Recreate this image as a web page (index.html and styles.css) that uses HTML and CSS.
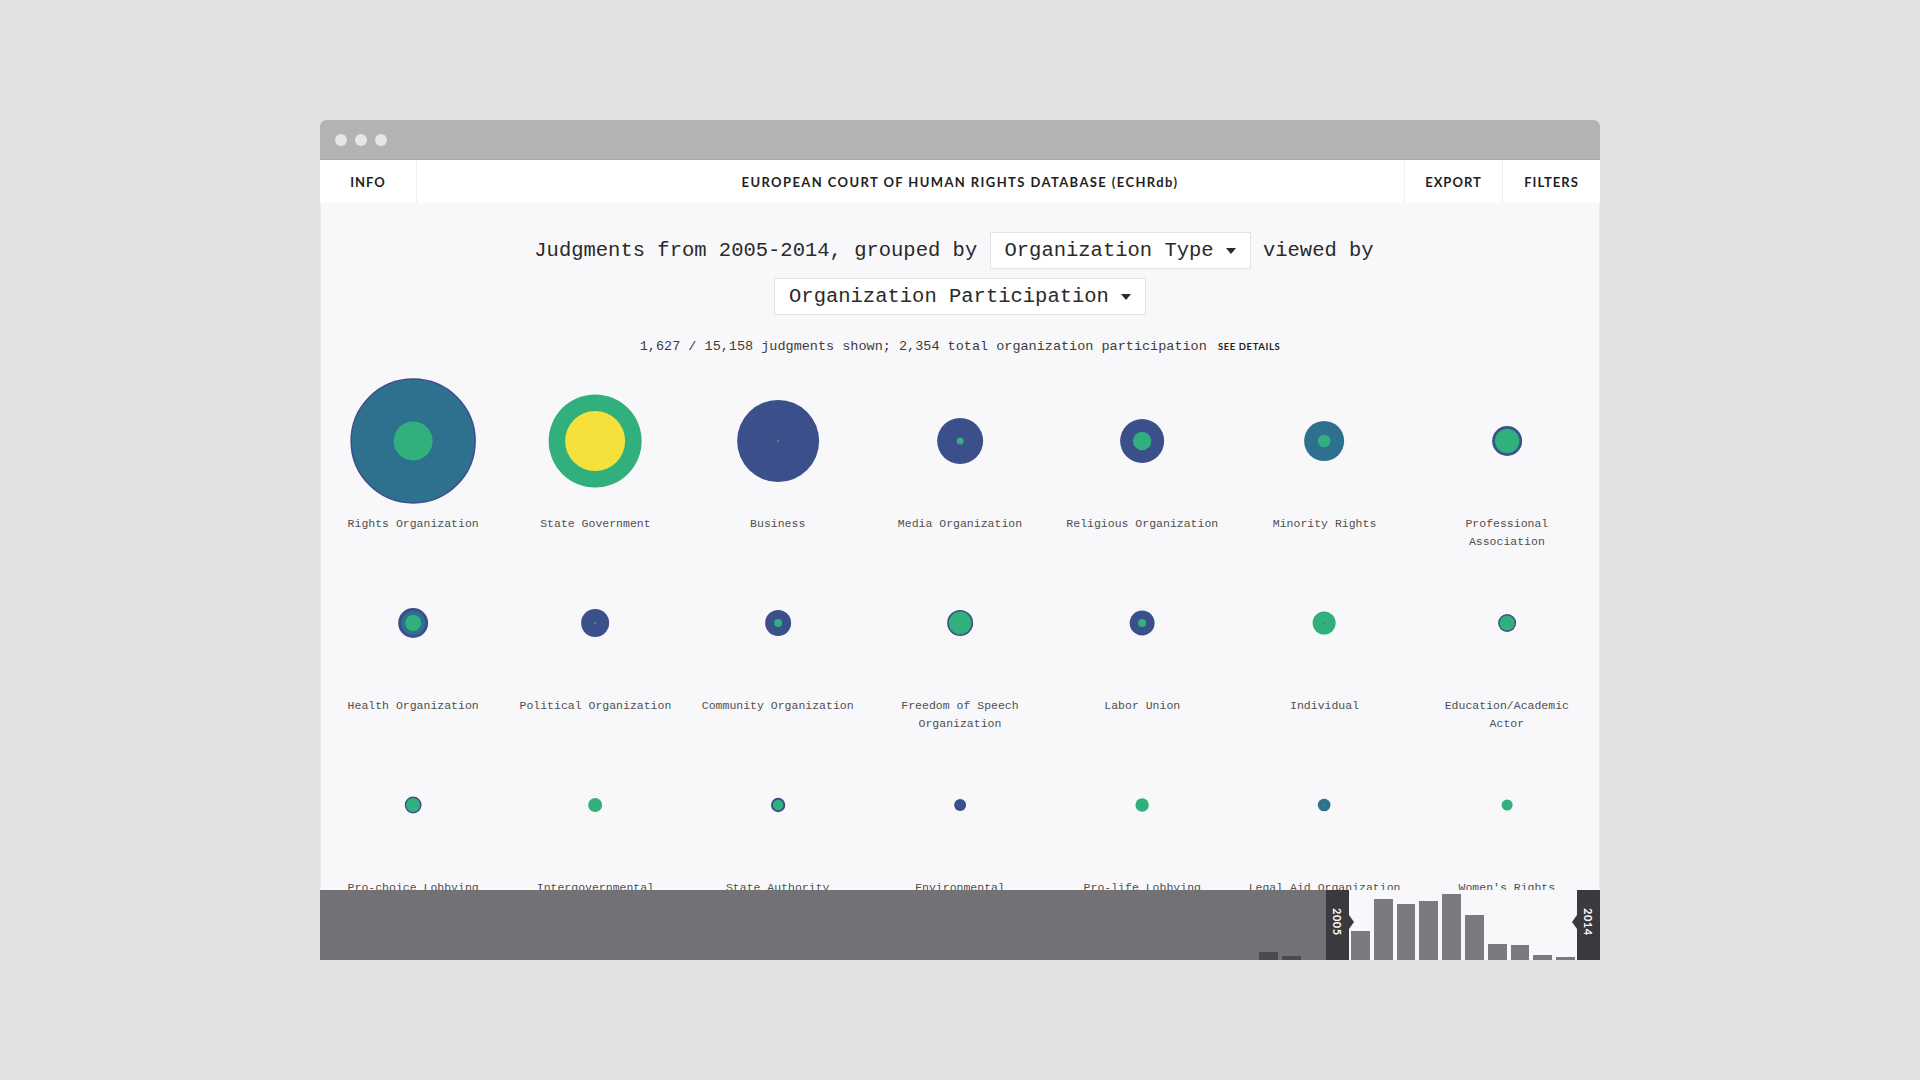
FILE: index.html
```html
<!DOCTYPE html>
<html lang="en">
<head>
    <meta charset="UTF-8">
    <meta name="viewport" content="width=device-width, initial-scale=1.0">
    <title>ECHRdb - Judgments by Organization Type</title>
    <link rel="stylesheet" href="styles.css">
</head>
<body>
    <div class="window">
        <div class="titlebar">
            <span class="dot"></span>
            <span class="dot"></span>
            <span class="dot"></span>
        </div>
        <header class="nav">
            <div class="nav-left">
                <a class="nav-item">INFO</a>
            </div>
            <div class="nav-title">EUROPEAN COURT OF HUMAN RIGHTS DATABASE (ECHRdb)</div>
            <div class="nav-right">
                <a class="nav-item">EXPORT</a>
                <a class="nav-item">FILTERS</a>
            </div>
        </header>
        <main class="content">
            <h1 class="query">Judgments from 2005-2014, grouped by <span class="select">Organization Type<i class="caret"></i></span> viewed by <span class="select">Organization Participation<i class="caret"></i></span></h1>
            <p class="summary">1,627 / 15,158 judgments shown; 2,354 total organization participation <a class="details">SEE DETAILS</a></p>
            <div class="grid" id="grid"></div>
        </main>
        <footer class="timeline">
            <div class="tl-out" id="tlOut"></div>
            <div class="handle handle-start"><span>2005</span></div>
            <div class="tl-in" id="tlIn"></div>
            <div class="handle handle-end"><span>2014</span></div>
        </footer>
    </div>
    <script>
        const B = '#3b4f8a';
        const T = '#2d718e';
        const G = '#31b07e';
        const Y = '#f6e13c';

        // [label, [radius, fill, stroke?] from outside to inside]
        const groups = [
            ['Rights Organization', [[62, T, B], [19.5, G]]],
            ['State Government', [[46.5, G], [30, Y]]],
            ['Business', [[41, B], [1, G]]],
            ['Media Organization', [[23, B], [3.5, G]]],
            ['Religious Organization', [[22, B], [9.2, G]]],
            ['Minority Rights', [[20, T], [6.3, G]]],
            ['Professional Association', [[15, B], [12.8, T], [12, G]]],
            ['Health Organization', [[15, B], [12, T], [8, G]]],
            ['Political Organization', [[14, B], [1, G]]],
            ['Community Organization', [[13, B], [4, G]]],
            ['Freedom of Speech Organization', [[13, B], [11.4, G]]],
            ['Labor Union', [[12.5, B], [4, G]]],
            ['Individual', [[11.5, G], [0.8, T]]],
            ['Education/Academic Actor', [[9, B], [7.6, G]]],
            ['Pro-choice Lobbying', [[8.4, B], [7, G]]],
            ['Intergovernmental', [[7, G]]],
            ['State Authority', [[7.2, B], [5.2, G]]],
            ['Environmental', [[6, B]]],
            ['Pro-life Lobbying', [[6.7, G]]],
            ['Legal Aid Organization', [[6.3, T], [0.8, G]]],
            ["Women's Rights", [[5.5, G]]]
        ];

        const grid = document.getElementById('grid');
        groups.forEach(([label, rings]) => {
            const circles = rings.map(([r, fill, stroke]) => {
                const line = stroke ? ` stroke="${stroke}" stroke-width="1.5"` : '';
                return `<circle cx="50%" cy="74" r="${r}" fill="${fill}"${line}/>`;
            }).join('');
            const cell = document.createElement('div');
            cell.className = 'cell';
            cell.innerHTML = `<svg class="bubble" width="100%" height="148">${circles}</svg><div class="label">${label}</div>`;
            grid.appendChild(cell);
        });

        // judgments per year, 1961-2014; the selected range is 2005-2014
        const before = new Array(44).fill(0);
        before[41] = 8;
        before[42] = 4;
        const selected = [29, 61, 56, 59, 66, 45, 16, 15, 5, 3];

        function drawBars(el, heights) {
            heights.forEach(h => {
                const slot = document.createElement('div');
                slot.className = 'slot';
                slot.innerHTML = `<div class="bar" style="height:${h}px"></div>`;
                el.appendChild(slot);
            });
        }

        drawBars(document.getElementById('tlOut'), before);
        drawBars(document.getElementById('tlIn'), selected);
    </script>
</body>
</html>
```

FILE: styles.css
```css
body {
    margin: 0;
    background-color: #e2e2e2;
}

.window {
    width: 1280px;
    height: 840px;
    margin: 120px auto 0;
    display: flex;
    flex-direction: column;
    background-color: #f8f8fa;
    border-radius: 6px 6px 0 0;
    overflow: hidden;
}

.titlebar {
    flex: none;
    height: 40px;
    box-sizing: border-box;
    display: flex;
    align-items: center;
    gap: 8px;
    padding-left: 15px;
    background-color: #b3b3b3;
    border-bottom: 1px solid #a8a8a8;
}

.dot {
    width: 12px;
    height: 12px;
    border-radius: 50%;
    background-color: #e6e6e6;
}

/* top navigation */
.nav {
    flex: none;
    height: 43px;
    display: grid;
    grid-template-columns: 1fr auto 1fr;
    background-color: #fff;
    font-family: Lato, "Liberation Sans", sans-serif;
    font-weight: 700;
    font-size: 13px;
    letter-spacing: 1.4px;
    color: #1f1f1f;
}

.nav-left, .nav-right {
    display: flex;
}

.nav-right {
    justify-content: flex-end;
}

.nav-item {
    width: 97px;
    display: flex;
    align-items: center;
    justify-content: center;
    cursor: pointer;
    letter-spacing: 1px;
}

.nav-left .nav-item {
    width: 96px;
    border-right: 1px solid #f0f0f0;
}

.nav-right .nav-item {
    border-left: 1px solid #f0f0f0;
}

.nav-title {
    align-self: center;
}

/* main view */
.content {
    flex: 1;
    min-height: 0;
    overflow: hidden;
    border-left: 1px solid #ececee;
    border-right: 1px solid #ececee;
}

.query {
    max-width: 900px;
    margin: 0 auto;
    padding: 25px 12px 0 0;
    font-family: "Liberation Mono", monospace;
    font-weight: 400;
    font-size: 20.5px;
    line-height: 46px;
    text-align: center;
    color: #2a2a2a;
}

.select {
    display: inline-block;
    vertical-align: middle;
    height: 37px;
    box-sizing: border-box;
    padding: 0 14px;
    line-height: 35px;
    background-color: #fff;
    border: 1px solid #e3e3e5;
    cursor: pointer;
}

.query .select:last-child {
    margin-left: 12px;
}

.caret {
    display: inline-block;
    vertical-align: middle;
    margin-left: 12px;
    border-left: 5px solid transparent;
    border-right: 5px solid transparent;
    border-top: 6px solid #2a2a2a;
}

.summary {
    margin: 17px 0 0;
    font-family: "Liberation Mono", monospace;
    font-size: 13.5px;
    line-height: 20px;
    text-align: center;
    color: #3c3c3c;
}

.details {
    margin-left: 3px;
    font-family: Lato, "Liberation Sans", sans-serif;
    font-weight: 700;
    font-size: 9.5px;
    letter-spacing: 0.6px;
    color: #1f1f1f;
    cursor: pointer;
}

.grid {
    display: grid;
    grid-template-columns: repeat(7, 1fr);
    grid-auto-rows: 182px;
    margin-top: 10px;
    padding: 0 1px;
}

.cell {
    text-align: center;
}

.bubble {
    display: block;
}

.label {
    max-width: 160px;
    margin: 0 auto;
    font-family: "Liberation Mono", monospace;
    font-size: 11.5px;
    line-height: 18px;
    color: #4f4f4f;
}

/* year brush */
.timeline {
    flex: none;
    height: 70px;
    display: flex;
    background-color: #727176;
}

.tl-out {
    width: 1006px;
    display: flex;
}

.tl-in {
    width: 228px;
    display: flex;
    background-color: #f8f8fa;
}

.slot {
    flex: 1;
    display: flex;
    align-items: flex-end;
    padding: 0 2px;
}

.bar {
    flex: 1;
    background-color: #7b7a80;
}

.tl-out .bar {
    background-color: #4b4a4f;
}

.handle {
    position: relative;
    z-index: 1;
    width: 23px;
    display: flex;
    align-items: center;
    justify-content: center;
    background-color: #3a393e;
    color: #fff;
    font-family: Lato, "Liberation Sans", sans-serif;
    font-weight: 700;
    font-size: 11px;
    letter-spacing: 0.5px;
}

.handle span {
    writing-mode: vertical-rl;
    margin-top: -6px;
}

.handle::after {
    content: "";
    position: absolute;
    top: 25px;
    border-top: 7px solid transparent;
    border-bottom: 7px solid transparent;
}

.handle-start::after {
    right: -5px;
    border-left: 5px solid #3a393e;
}

.handle-end::after {
    left: -5px;
    border-right: 5px solid #3a393e;
}
```
